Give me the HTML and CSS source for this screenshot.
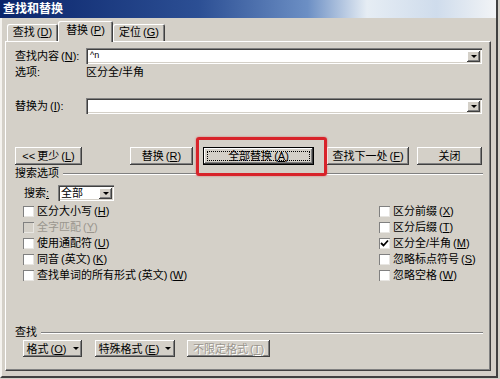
FILE: index.html
```html
<!DOCTYPE html>
<html>
<head>
	<title>查找和替换</title>
	<link rel="stylesheet" href="styles.css">
</head>
<body>
<div class="dlg">
  <div class="title">查找和替换</div>
  <div class="tabs">
    <div class="tab t1">查找 (<u>D</u>)</div>
    <div class="tab t2 on">替换 (<u>P</u>)</div>
    <div class="tab t3">定位 (<u>G</u>)</div>
  </div>
  <div class="panel">
    <div class="row">
      <span class="lbl">查找内容 (<u>N</u>):</span>
      <div class="field"><span class="val">^n</span><i class="drop"></i></div>
    </div>
    <div class="row note">
      <span class="lbl">选项:</span><span>区分全/半角</span>
    </div>
    <div class="row r3">
      <span class="lbl">替换为 (<u>I</u>):</span>
      <div class="field"><span class="val"></span><i class="drop"></i></div>
    </div>
    <div class="btns">
      <div class="btn b-more">&lt;&lt; 更少 (<u>L</u>)</div>
      <div class="btn b-rep">替换 (<u>R</u>)</div>
      <div class="btn b-all">全部替换 (<u>A</u>)<span class="mark"></span></div>
      <div class="btn b-next">查找下一处 (<u>F</u>)</div>
      <div class="btn b-close">关闭</div>
    </div>
    <div class="grp"><span>搜索选项</span><i></i></div>
    <div class="srch">
      <span class="slbl">搜索<u>:</u></span>
      <div class="sel"><span>全部</span><i class="drop"></i></div>
    </div>
    <div class="opts">
      <div class="col">
        <div class="chk"><i class="box"></i>区分大小写 (<u>H</u>)</div>
        <div class="chk off"><i class="box"></i>全字匹配 (<u>Y</u>)</div>
        <div class="chk"><i class="box"></i>使用通配符 (<u>U</u>)</div>
        <div class="chk"><i class="box"></i>同音 (英文) (<u>K</u>)</div>
        <div class="chk"><i class="box"></i>查找单词的所有形式 (英文) (<u>W</u>)</div>
      </div>
      <div class="col right">
        <div class="chk"><i class="box"></i>区分前缀 (<u>X</u>)</div>
        <div class="chk"><i class="box"></i>区分后缀 (<u>T</u>)</div>
        <div class="chk"><i class="box"><svg width="9" height="9" viewBox="0 0 9 9"><polyline points="1,4 3.5,6.5 8,1.5" fill="none" stroke="#000" stroke-width="1.8"/></svg></i>区分全/半角 (<u>M</u>)</div>
        <div class="chk"><i class="box"></i>忽略标点符号 (<u>S</u>)</div>
        <div class="chk"><i class="box"></i>忽略空格 (<u>W</u>)</div>
      </div>
    </div>
    <div class="grp g2"><span>查找</span><i></i></div>
    <div class="btns2">
      <div class="btn b-fmt">格式 (<u>O</u>) <i class="tri"></i></div>
      <div class="btn b-spc">特殊格式 (<u>E</u>) <i class="tri"></i></div>
      <div class="btn b-none dis">不限定格式 (<u>T</u>)</div>
    </div>
  </div>
</div>
</body>
</html>
```

FILE: styles.css
```css
body{
  margin: 0;
  background: #d4d0c8;
  font: 11px/14px "Liberation Sans", "Noto Sans CJK SC", sans-serif;
  word-spacing: -1px;
  color: #000;
}
u{ text-decoration: underline; }
.dlg{
  width: 498px;
  height: 378px;
  box-sizing: border-box;
  border-left: 2px solid #f4f2ee;
  border-right: 2px solid #404040;
  border-bottom: 2px solid #404040;
}
.title{
  height: 18px;
  margin-left: -2px;
  padding-left: 3px;
  line-height: 18px;
  font-size: 12px;
  color: #fff;
  font-weight: bold;
  background: linear-gradient(to right, #0a246a, #2c4f94 40%, #6c8fc4 62%, #e6edf4 74%, #cfdcec 88%, #f2f4f6);
}
.tabs{
  display: flex;
  align-items: flex-end;
  height: 23px;
  padding-left: 5px;
}
.tab{
  height: 17px;
  line-height: 17px;
  text-align: center;
  border-radius: 2px 2px 0 0;
  box-shadow: inset 1px 1px #fff, inset -1px 0 #404040, inset -2px 0 #808080;
}
.t1{ width: 51px; }
.t2{ width: 55px; }
.t3{ width: 52px; }
.tab.on{
  height: 21px;
  margin-bottom: -1px;
  line-height: 19px;
  position: relative;
  z-index: 1;
  background: #d4d0c8;
}
.panel{
  height: 330px;
  margin: 0 5px 0 3px;
  box-sizing: border-box;
  padding: 6px 0 0 9px;
  border-top: 1px solid #fff;
  border-left: 1px solid #fff;
  border-right: 1px solid #404040;
  border-bottom: 1px solid #404040;
  box-shadow: inset -1px -1px #808080;
}
.row{
  display: flex;
  align-items: center;
  height: 16px;
}
.lbl{ width: 71px; }
.note{ margin-top: 1px; height: 14px; }
.r3{ margin-top: 19px; }
.field, .sel{
  display: flex;
  align-items: center;
  box-sizing: border-box;
  height: 16px;
  padding: 2px 2px 2px 4px;
  background: #fff;
  box-shadow: inset 1px 1px #808080, inset 2px 2px #404040, inset -1px -1px #fff, inset -2px -2px #d4d0c8;
}
.field{ width: 396px; }
.val{ font-size: 9px; line-height: 10px; align-self: flex-start; }
.drop{
  margin-left: auto;
  width: 13px;
  height: 11px;
  box-sizing: border-box;
  background: #d4d0c8;
  box-shadow: inset -1px -1px #404040, inset 1px 1px #fff, inset -2px -2px #808080;
  display: flex;
  align-items: center;
  justify-content: center;
}
.drop::after, .tri{
  content: "";
  display: inline-block;
  border-left: 3px solid transparent;
  border-right: 3px solid transparent;
  border-top: 3px solid #000;
}
.btns{
  display: flex;
  margin-top: 33px;
}
.btn{
  height: 18px;
  box-sizing: border-box;
  display: flex;
  align-items: center;
  justify-content: center;
  white-space: pre;
  background: #d4d0c8;
  box-shadow: inset -1px -1px #404040, inset 1px 1px #fff, inset -2px -2px #808080;
}
.b-more{ width: 67px; }
.b-rep{ width: 63px; margin-left: 48px; }
.b-all{
  width: 111px;
  margin-left: 10px;
  position: relative;
  box-shadow: inset 0 0 0 1px #000, inset -2px -2px #404040, inset 2px 2px #fff, inset -3px -3px #808080;
}
.b-all::before{
  content: "";
  position: absolute;
  left: 4px; right: 4px; top: 4px; bottom: 4px;
  border: 1px dotted #000;
}
.mark{
  position: absolute;
  left: -7px; right: -13px; top: -10px; bottom: -11px;
  border: 3px solid #d8232a;
  border-radius: 3px;
  box-shadow: 0 0 2px rgba(216, 35, 42, 0.6);
}
.b-next{ width: 82px; margin-left: 13px; }
.b-close{ width: 65px; margin-left: 8px; }
.grp{
  display: flex;
  align-items: center;
  height: 14px;
  margin-top: 1px;
}
.grp i{
  flex: 1;
  margin: 1px 7px 0 4px;
  border-top: 1px solid #808080;
  border-bottom: 1px solid #fff;
}
.srch{
  display: flex;
  align-items: center;
  margin-top: 5px;
  padding-left: 9px;
}
.slbl{ width: 34px; }
.sel{ width: 56px; padding-left: 3px; }
.opts{
  display: flex;
  margin-top: 2px;
}
.col{ padding-left: 8px; }
.col.right{ margin-left: auto; width: 111px; padding-left: 0; }
.chk{
  display: flex;
  align-items: center;
  height: 16px;
  white-space: pre;
}
.box{
  width: 11px;
  height: 11px;
  margin-right: 3px;
  box-sizing: border-box;
  background: #fff;
  box-shadow: inset 1px 1px #808080, inset -1px -1px #e8e6e2;
  display: flex;
  align-items: center;
  justify-content: center;
}
.off{ color: #9a968e; }
.off .box{ background: #d4d0c8; }
.g2{ margin-top: 42px; }
.btns2{
  display: flex;
  margin-top: 1px;
  padding-left: 8px;
}
.btns2 .btn{ height: 17px; }
.btns2 .tri{ margin-left: 4px; }
.b-fmt{ width: 59px; }
.b-spc{ width: 80px; margin-left: 13px; }
.b-none{ width: 83px; margin-left: 12px; }
.dis{ color: #9a968e; text-shadow: 1px 1px #fff; }
```
